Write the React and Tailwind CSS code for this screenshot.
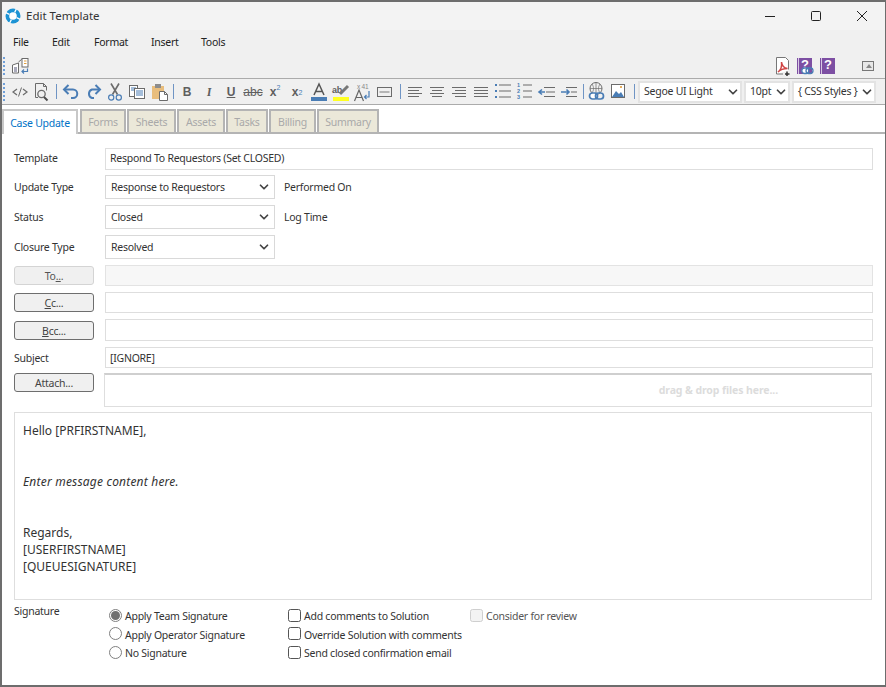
import React from "react";
import { ChevronDown } from "lucide-react";

const G = "#6b6b6b";
const B = "#4a7db5";

const Ico = ({ children }) => (
  <svg width="22" height="22" viewBox="0 0 22 22" fill="none" className="shrink-0">{children}</svg>
);

const Grip = () => (
  <div className="w-[7px] flex flex-col gap-[2px] pl-[1px] shrink-0">
    <div className="w-[2px] h-[2px] bg-[#6f9fd8]" /><div className="w-[2px] h-[2px] bg-[#6f9fd8]" /><div className="w-[2px] h-[2px] bg-[#6f9fd8]" /><div className="w-[2px] h-[2px] bg-[#6f9fd8]" /><div className="w-[2px] h-[2px] bg-[#6f9fd8]" />
  </div>
);
const Sep = ({ w = "w-[7px]" }) => (
  <div className={`${w} h-[15px] flex justify-center shrink-0`}><div className="w-px h-full bg-[#6f94c4]" /></div>
);
const Letter = ({ children, cls = "" }) => (
  <div className={`w-[22px] h-[22px] flex items-center justify-center shrink-0 text-[12px] tracking-normal font-['Liberation_Sans',sans-serif] text-[#5f5f5f] font-bold ${cls}`}>{children}</div>
);
const Lines = ({ rows }) => (
  <Ico>{rows.map((r, i) => <path key={i} d={`M${r[0]} ${r[2]}H${r[1]}`} stroke={G} strokeWidth="1" />)}</Ico>
);

const Source = () => <Ico><path d="M8 8l-4 3 4 3M14 8l4 3-4 3" stroke={G} strokeWidth="1.2" /><path d="M12.5 6.5l-3 9" stroke={G} /></Ico>;
const Preview = () => <Ico><path d="M4.5 16.5V2.5h8l3 3v4" stroke={G} /><path d="M12.5 2.5v3h3" stroke={G} /><path d="M4.5 16.5H7" stroke={G} /><circle cx="10.5" cy="13" r="3.7" stroke={G} strokeWidth="1.3" /><path d="M13 16l3.5 3.5" stroke="#4d4d4d" strokeWidth="2" /></Ico>;
const Undo = () => <Ico><path d="M5 8.5h8a4 4 0 010 8.5h-2" stroke={B} strokeWidth="2" /><path d="M8.5 4L4 8.5l4.5 4.5" stroke={B} strokeWidth="2" /></Ico>;
const Redo = () => <Ico><path d="M17 8.5H10a4.5 4.5 0 000 8.5h2" stroke={B} strokeWidth="2" /><path d="M13.5 4L18 8.5 13.5 13" stroke={B} strokeWidth="2" /></Ico>;
const Cut = () => <Ico><path d="M7 2.5l6.5 11M15 2.5l-6.5 11" stroke={G} strokeWidth="1.6" /><circle cx="7.2" cy="16.5" r="2.6" stroke={B} strokeWidth="1.2" /><circle cx="14.8" cy="16.5" r="2.6" stroke={B} strokeWidth="1.2" /></Ico>;
const Copy = () => <Ico><rect x="3.5" y="4.5" width="8" height="11" fill="#fff" stroke={G} /><path d="M5 7h5M5 9h5" stroke={B} /><rect x="8.5" y="7.5" width="10" height="10" fill="#fff" stroke={G} /><path d="M10 10h7M10 12h7M10 14h7" stroke={B} /></Ico>;
const Paste = () => <Ico><path d="M4 5h12v13H4z" fill="#e8bd7c" /><rect x="7" y="3" width="6" height="4" fill="#8c8c8c" /><path d="M11.5 10.5h5l3 3v6h-8z" fill="#fff" stroke={G} /><path d="M16.5 10.5v3h3" stroke={G} /></Ico>;
const ColorA = () => <Ico><path d="M6 14L11 3l5 11M7.8 10.5h6.4" stroke="#555" strokeWidth="1.5" /><rect x="3" y="16" width="16" height="4" fill={B} /></Ico>;
const High = () => <Ico><text x="2" y="12" fontSize="9" fontWeight="700" fontFamily="Liberation Sans" fill="#5f5f5f">ab</text><path d="M10 13l8-8" stroke="#777" strokeWidth="3" /><rect x="3" y="16" width="16" height="4" fill="#ffff20" /></Ico>;
const Rep = () => <Ico><text x="5" y="8" fontSize="6.5" fontFamily="Liberation Sans" fill="#888">x 41</text><path d="M2.5 20L7 9l4.5 11M4 16.5h6" stroke="#666" strokeWidth="1.2" /><path d="M17 10v6h-4M14.5 14l-2 2 2 2" stroke={B} strokeWidth="1.2" /></Ico>;
const BoxIc = () => <Ico><rect x="3.5" y="6.5" width="14" height="9" stroke={G} /><path d="M5.5 11h10" stroke="#b5b5b5" strokeWidth="2" /></Ico>;
const List = () => <Ico>{[4, 10, 16].map((y) => <g key={y}><rect x="3" y={y - 1} width="2" height="2" fill={B} /><path d={`M7 ${y}h12`} stroke={G} /></g>)}</Ico>;
const Num = () => (
  <Ico>
    {[["1", 6], ["2", 12], ["3", 18]].map(([t, y]) => <g key={t}><text x="3" y={y} fontSize="5.5" fontWeight="700" fontFamily="Liberation Sans" fill={B}>{t}</text><path d={`M9 ${y - 2}h9`} stroke={G} /></g>)}
  </Ico>
);
const Outdent = () => <Ico><path d="M8 6.5h11M10 11h9M8 15.5h11" stroke={G} /><path d="M9 11H3M6 8.5L3 11l3 2.5" stroke={B} strokeWidth="1.6" /></Ico>;
const Indent = () => <Ico><path d="M8 6.5h11M13 11h6M8 15.5h11" stroke={G} /><path d="M3 11h8M8.5 8.5L11 11l-2.5 2.5" stroke={B} strokeWidth="1.6" /></Ico>;
const LinkIc = () => <Ico><circle cx="10" cy="7.5" r="6" stroke={G} /><path d="M4 7.5h12M10 1.5v12M6 3c2 3 2 6 0 9M14 3c-2 3-2 6 0 9" stroke={G} strokeWidth=".7" /><rect x="3.5" y="12" width="8" height="6" rx="3" fill="#fff" stroke={B} strokeWidth="1.7" /><rect x="9.5" y="12" width="8" height="6" rx="3" stroke={B} strokeWidth="1.7" /></Ico>;
const ImageIc = () => <Ico><rect x="3.5" y="3.5" width="13" height="13" fill="#fff" stroke={G} /><path d="M4 16l4-6 3 3 2-2 3 5z" fill={B} /><rect x="12" y="5" width="2" height="2" fill="#e8b060" /></Ico>;

const Stack = () => (
  <svg width="18" height="18" viewBox="0 0 18 18" fill="none"><path d="M1.5 8l6-2v10h-6z" fill="#fff" stroke={G} /><rect x="3" y="10" width="3" height="5" fill="#aab" /><path d="M7.500 5l3-2.500h3v7" stroke={G} /><rect x="11" y="1.500" width="6" height="8.500" fill="#fff" stroke={G} /><path d="M13 4h2.500" stroke="#e0a040" /><path d="M13 6.500h2.500" stroke="#e0a040" /><path d="M16.500 11.500v3H11M13 12.500l-2 2 2 2" stroke={B} strokeWidth="1.200" /></svg>
);
const Pdf = () => (
  <svg width="17" height="20" viewBox="0 0 17 20" fill="none"><path d="M1.5 17V.5h9l3 3v10" fill="#fff" /><path d="M1.5 17V.5h9l3 3v9M1.5 17H8" stroke="#777" /><path d="M3 15c3-2 4-6 3.5-10 .5 4 2 6 6 6.5-4 0-7 1-9.5 3.5z" stroke="#d04545" strokeWidth="1.5" /><path d="M12 14.500v4.500M10 17h4.500" stroke="#333" strokeWidth="1.5" /></svg>
);
const PurpleBook = ({ link }) => (
  <span className="relative block w-[15px] h-[16px] bg-[#7d4fa3]">
    <span className="absolute left-[1px] top-0 bottom-0 w-px bg-white/70" />
    <span className="absolute left-[4px] top-[-2px] font-['Liberation_Sans',sans-serif] text-white font-bold text-[13px] leading-[18px]">?</span>
    {link && (
      <svg className="absolute left-[4px] top-[9px]" width="13" height="8" viewBox="0 0 13 8" fill="none"><rect x=".8" y="1" width="7" height="5.5" rx="2.7" fill="#fff" stroke={B} strokeWidth="1.3" /><rect x="5" y="1" width="7" height="5.5" rx="2.7" stroke={B} strokeWidth="1.3" /></svg>
    )}
  </span>
);
const Logo = () => (
  <svg width="16" height="16" viewBox="0 0 16 16" fill="none"><circle cx="8" cy="8" r="7.5" fill="#1c93d4" /><circle cx="8" cy="8" r="3.8" fill="#fff" /><path d="M8 0v4M16 8h-4M8 16v-4M0 8h4" stroke="#fff" strokeWidth="1.3" transform="rotate(25 8 8)" /></svg>
);

const Sel = ({ w, children, cls = "", h = "h-[22px]" }) => (
  <div className={`${w} ${h} ${cls} shrink-0 bg-white border-2 border-[#e3e3e3] flex items-center justify-between pl-[4px] text-[#333]`}>
    <span className="whitespace-nowrap">{children}</span>
    <ChevronDown size={14} strokeWidth={3} className="text-[#444] shrink-0" />
  </div>
);
const FormSelect = ({ children }) => (
  <div className="w-[170px] h-[24px] bg-white border border-[#d9d9d9] flex items-center justify-between pl-[5px] pr-[3px] text-[#333]">
    <span>{children}</span>
    <ChevronDown size={14} strokeWidth={3} className="text-[#444]" />
  </div>
);
const Btn = ({ children, dis }) => (
  <div className={`w-[80px] h-[19px] pt-[2px] rounded-[3px] flex items-center justify-center bg-[#f0f0f0] text-[#444] border ${dis ? "border-[#d4d4d4] text-[#555]" : "border-[#6e6e6e]"}`}>{children}</div>
);
const Tab = ({ children, w }) => (
  <div className={`${w} h-[23px] pt-[2px] bg-[#ebe8d9] border-2 border-b-0 border-[#b4b4b4] flex items-center justify-center text-[#a9a9a9]`}>{children}</div>
);
const Radio = ({ on, children }) => (
  <div className="h-[18.5px] flex items-center">
    <div className="w-[13px] h-[13px] rounded-full border border-[#808080] flex items-center justify-center mr-[3px] -mt-[2px]">
      {on && <div className="w-[9px] h-[9px] rounded-full bg-[#707070]" />}
    </div>
    <span>{children}</span>
  </div>
);
const Check = ({ children, dis }) => (
  <div className={`h-[18.5px] flex items-center ${dis ? "text-[#555]" : ""}`}>
    <div className={`w-[13px] h-[13px] rounded-[2.5px] border mr-[3px] -mt-[2px] ${dis ? "border-[#cfcfcf] bg-[#f3f3f3]" : "border-[#555]"}`} />
    <span>{children}</span>
  </div>
);

export default function App() {
  return (
    <div className="w-[886px] h-[687px] overflow-hidden bg-white border-2 border-[#6d6d6d] border-r-[1px] flex flex-col font-['Noto_Sans',sans-serif] text-[10.5px] tracking-[-0.25px] text-[#333] leading-none">
      {/* title bar */}
      <div className="h-[28px] bg-[#f3f3f3] flex items-center shrink-0 pl-[3px]">
        <Logo />
        <span className="ml-[5px] text-[11.5px] tracking-normal text-[#333]">Edit Template</span>
        <div className="ml-auto flex items-center">
          <div className="w-[46px] flex justify-center"><div className="w-[10px] h-px bg-[#222]" /></div>
          <div className="w-[46px] flex justify-center"><div className="w-[10px] h-[10px] rounded-[1.5px] border border-[#222]" /></div>
          <svg className="mx-[18px]" width="10" height="10" viewBox="0 0 10 10"><path d="M0 0l10 10M10 0L0 10" stroke="#222" strokeWidth="1" /></svg>
        </div>
      </div>
      {/* menu */}
      <div className="h-[24px] bg-[#f0f0f0] flex items-center shrink-0 pl-[11px] text-[#222]">
        <span className="w-[39px]">File</span>
        <span className="w-[42px]">Edit</span>
        <span className="w-[57px]">Format</span>
        <span className="w-[50px]">Insert</span>
        <span>Tools</span>
      </div>
      {/* toolbar 1 */}
      <div className="h-[24px] bg-[#f0f0f0] flex items-center shrink-0">
        <Grip />
        <span className="ml-[2px]"><Stack /></span>
        <div className="ml-auto flex items-center">
          <span className="mr-[5px] mt-[1px]"><Pdf /></span>
          <span className="mr-[8px]"><PurpleBook link /></span>
          <span className="mr-[27px]"><PurpleBook /></span>
          <div className="w-[12px] h-[10px] border border-[#777] mr-[11px] relative bg-[#e8e8e8]">
            <div className="absolute left-[3px] top-[2px] w-0 h-0 border-x-[3px] border-x-transparent border-b-[4px] border-b-[#888]" />
          </div>
        </div>
      </div>
      {/* toolbar 2 */}
      <div className="h-[27px] bg-[#f0f0f0] border-y border-[#ababab] flex items-center shrink-0">
        <Grip />
        <Source /><Preview />
        <Sep w="w-[7px]" /><Undo /><Redo /><Cut /><Copy /><Paste />
        <Sep w="w-[6px]" />
        <Letter>B</Letter>
        <Letter cls="italic font-serif">I</Letter>
        <Letter cls="underline">U</Letter>
        <Letter cls="line-through font-normal text-[11px]">abc</Letter>
        <Letter>x<sup className="text-[7px] text-[#4a7db5] font-normal">2</sup></Letter>
        <Letter>x<sub className="text-[7px] text-[#4a7db5] font-normal">2</sub></Letter>
        <ColorA /><High /><Rep /><BoxIc />
        <Sep w="w-[8px]" />
        <Lines rows={[[4, 18, 6.5], [4, 15, 9.5], [4, 18, 12.5], [4, 15, 15.5]]} />
        <Lines rows={[[4, 18, 6.5], [6, 16, 9.5], [4, 18, 12.5], [6, 16, 15.5]]} />
        <Lines rows={[[4, 18, 6.5], [7, 18, 9.5], [4, 18, 12.5], [7, 18, 15.5]]} />
        <Lines rows={[[4, 18, 6.5], [4, 18, 9.5], [4, 18, 12.5], [4, 18, 15.5]]} />
        <List /><Num /><Outdent /><Indent />
        <Sep w="w-[6px]" />
        <LinkIc /><ImageIc />
        <Sep w="w-[8px]" />
        <div className="flex gap-[2px] items-center">
          <Sel w="w-[104px]">Segoe UI Light</Sel>
          <Sel w="w-[46px]">10pt</Sel>
          <Sel w="w-[84px]">{"{ CSS Styles }"}</Sel>
        </div>
      </div>
      {/* tabs */}
      <div className="h-[29px] shrink-0 flex items-end gap-[1px] border-b-2 border-[#b4b4b4] bg-white">
        <div className="w-[76px] h-[25px] pt-[1px] -mb-[2px] mr-px border-2 border-b-0 border-[#c8c8c8] bg-white flex items-center justify-center text-[#0072c6] relative z-10">Case Update</div>
        <Tab w="w-[46px]">Forms</Tab>
        <Tab w="w-[49px]">Sheets</Tab>
        <Tab w="w-[48px]">Assets</Tab>
        <Tab w="w-[42px]">Tasks</Tab>
        <Tab w="w-[47px]">Billing</Tab>
        <Tab w="w-[62px]">Summary</Tab>
      </div>
      {/* form */}
      <div className="flex-1 min-h-0 flex flex-col pl-[12px] pt-[13px] relative">
        <div className="flex items-center h-[23px]">
          <span className="w-[91px]">Template</span>
          <div className="w-[768px] h-[22px] border border-[#dedede] flex items-center pl-[4px]">Respond To Requestors (Set CLOSED)</div>
        </div>
        <div className="flex items-center h-[24px] mt-[5px]">
          <span className="w-[91px]">Update Type</span>
          <FormSelect>Response to Requestors</FormSelect>
          <span className="ml-[9px]">Performed On</span>
        </div>
        <div className="flex items-center h-[24px] mt-[6px]">
          <span className="w-[91px]">Status</span>
          <FormSelect>Closed</FormSelect>
          <span className="ml-[9px]">Log Time</span>
        </div>
        <div className="flex items-center h-[24px] mt-[6px]">
          <span className="w-[91px]">Closure Type</span>
          <FormSelect>Resolved</FormSelect>
        </div>
        <div className="flex items-center h-[21px] mt-[6px]">
          <Btn dis><span>To<span className="underline">..</span>.</span></Btn>
          <div className="ml-[11px] w-[768px] h-[21px] bg-[#f7f7f7] border border-[#e3e3e3]" />
        </div>
        <div className="flex items-center h-[21px] mt-[6px]">
          <Btn><span><span className="underline">C</span>c...</span></Btn>
          <div className="ml-[11px] w-[768px] h-[21px] border border-[#dedede]" />
        </div>
        <div className="flex items-center h-[22px] mt-[6px]">
          <Btn><span><span className="underline">B</span>cc...</span></Btn>
          <div className="ml-[11px] w-[768px] h-[22px] border border-[#dedede]" />
        </div>
        <div className="flex items-center h-[21px] mt-[6px]">
          <span className="w-[91px] pt-[2px]">Subject</span>
          <div className="w-[768px] h-[21px] pt-[2px] border border-[#dedede] flex items-center pl-[4px]">[IGNORE]</div>
        </div>
        <div className="flex items-start h-[34px] mt-[5px]">
          <Btn>Attach...</Btn>
          <div className="ml-[10px] w-[768px] h-[34px] border border-[#dedede] border-t-2 border-t-[#cfcfcf] flex items-center justify-end pr-[93px] font-bold tracking-[-0.1px] text-[#dcdcdc]">drag &amp; drop files here...</div>
        </div>
        <div className="w-[858px] h-[188px] mt-[5px] border border-[#dedede] pl-[8px] pt-[9px] text-[12px] tracking-normal text-[#333] shrink-0 leading-[17px]">
          <p>Hello [PRFIRSTNAME],</p>
          <p className="mt-[34px] italic tracking-[0.2px]">Enter message content here.</p>
          <p className="mt-[34px]">Regards,</p>
          <p>[USERFIRSTNAME]</p>
          <p>[QUEUESIGNATURE]</p>
        </div>
        <div className="flex mt-[6px]">
          <span className="w-[95px]">Signature</span>
          <div className="w-[179px] mt-[1px]">
            <Radio on>Apply Team Signature</Radio>
            <Radio>Apply Operator Signature</Radio>
            <Radio>No Signature</Radio>
          </div>
          <div className="w-[182px] mt-[1px]">
            <Check>Add comments to Solution</Check>
            <Check>Override Solution with comments</Check>
            <Check>Send closed confirmation email</Check>
          </div>
          <div className="mt-[1px]"><Check dis>Consider for review</Check></div>
        </div>
      </div>
    </div>
  );
}
